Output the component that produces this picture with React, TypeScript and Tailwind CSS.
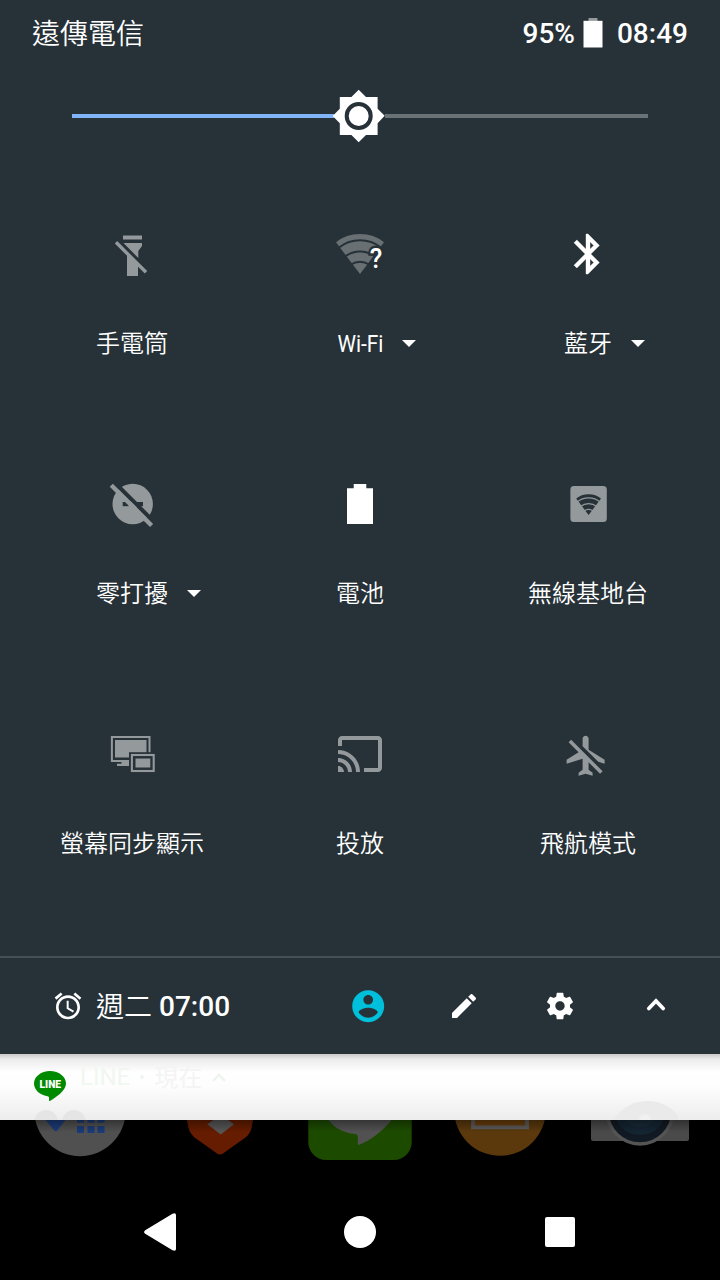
import type { ReactNode } from "react";

const OFF = "#94999c";
const PANEL = "#273238";

function Caret() {
  return (
    <svg width="14" height="8" viewBox="0 0 14 8" aria-hidden="true">
      <path d="M0 0h14L7 7z" fill="#fff" />
    </svg>
  );
}

function FlashlightOff() {
  return (
    <svg width="48" height="48" viewBox="0 0 48 48" fill={OFF}>
      <path d="M15 5.5h19v4H15z" />
      <path d="M15.5 13H34v3l-3.700 5v7z" />
      <path d="M19 22.500L30 34v12H19z" />
      <path d="M8 12.300l30 30" stroke={OFF} strokeWidth="3.400" />
    </svg>
  );
}

function WifiUnknown() {
  return (
    <svg width="48" height="48" viewBox="0 0 48 48">
      <path d="M24 44L0 12.300Q10 4 24 4t24 8.300z" fill="#687074" />
      <g fill="none" stroke={PANEL} strokeWidth="2">
        <path d="M3 17.500a34 34 0 0 1 42 0" />
        <path d="M9 26.500a25 25 0 0 1 30 0" />
        <path d="M15 34.500a16 16 0 0 1 18 0" />
      </g>
      <text
        x="40"
        y="38"
        textAnchor="middle"
        fontFamily="Roboto, sans-serif"
        fontWeight="500"
        fontSize="28"
        textLength="12.500"
        lengthAdjust="spacingAndGlyphs"
        fill="#fff"
        stroke={PANEL}
        strokeWidth="5"
        paintOrder="stroke"
      >
        ?
      </text>
    </svg>
  );
}

function Bluetooth() {
  return (
    <svg width="48" height="48" viewBox="0 0 24 24" fill="#fff" stroke="#fff" strokeWidth="0.200">
      <path d="M17.71 7.71L12 2h-1v7.59L6.41 5 5 6.41 10.59 12 5 17.59 6.41 19 11 14.41V22h1l5.71-5.71-4.3-4.29 4.3-4.29zM13 5.83l1.88 1.88L13 9.59V5.83zm1.88 10.46L13 18.17v-3.76l1.88 1.88z" />
    </svg>
  );
}

function DndOff() {
  return (
    <svg width="48" height="48" viewBox="0 0 48 48">
      <circle cx="24.700" cy="24" r="20.200" fill={OFF} />
      <path d="M14.700 22h20.300v4.200H14.700z" fill={PANEL} />
      <path d="M8 4l41 41" stroke={PANEL} strokeWidth="4.200" />
      <path d="M3.300 5.200l40.300 40.300" stroke={OFF} strokeWidth="4.400" />
      <path d="M20 21.500h3l6 6h-8z" fill={OFF} />
    </svg>
  );
}

function Battery() {
  return (
    <svg width="48" height="48" viewBox="0 0 48 48" fill="#fff">
      <path d="M17.700 4h12.600v4.300H37V44H11V8.300h6.700z" />
    </svg>
  );
}

function Hotspot() {
  return (
    <svg width="48" height="48" viewBox="0 0 48 48">
      <rect x="6.400" y="6" width="36.400" height="36" rx="3.500" fill={OFF} />
      <path d="M24.600 35L12.200 18.600q5-4.300 12.400-4.300t12.400 4.300z" fill={PANEL} />
      <g fill="none" stroke={OFF} strokeWidth="1.200">
        <path d="M13 22.200a18 18 0 0 1 23.200 0" />
        <path d="M16.500 26.500a13 13 0 0 1 16.200 0" />
        <path d="M20 31a8 8 0 0 1 9.200 0" />
      </g>
    </svg>
  );
}

function ScreenMirror() {
  return (
    <svg width="48" height="48" viewBox="0 0 48 48">
      <rect x="3.900" y="7" width="37.600" height="24" fill="none" stroke={OFF} strokeWidth="2" />
      <path d="M7 10h31.500v17.500H7z" fill={OFF} />
      <path d="M13.500 31h8v5H9v-2.200h4.500z" fill={OFF} />
      <path d="M21 22.200h27v21H21z" fill={PANEL} />
      <rect x="23.900" y="25" width="21.800" height="16" fill="none" stroke={OFF} strokeWidth="2.100" />
      <path d="M27.500 28.500h14.800v9H27.500z" fill={OFF} />
    </svg>
  );
}

function Cast() {
  return (
    <svg width="48" height="48" viewBox="0 0 24 24" fill={OFF}>
      <path d="M21 3H3c-1.1 0-2 .9-2 2v3h2V5h18v14h-7v2h7c1.1 0 2-.9 2-2V5c0-1.1-.9-2-2-2zM1 18v3h3c0-1.66-1.34-3-3-3zm0-4v2c2.76 0 5 2.24 5 5h2c0-3.87-3.13-7-7-7zm0-4v2c4.97 0 9 4.03 9 9h2c0-6.08-4.93-11-11-11z" />
    </svg>
  );
}

function AirplaneOff() {
  return (
    <svg width="48" height="48" viewBox="0.7 -0.9 24 24" fill={OFF}>
      <path d="M13 9V3.500c0-.83-.67-1.500-1.500-1.500S10 2.670 10 3.500v3.680l7.830 7.830L21 16v-2l-8-5zM3 5.270l4.990 4.990L2 14v2l8-2.500V19l-2 1.500V22l3.500-1 3.500 1v-1.500L13 19v-3.730L18.730 21 20 19.730 4.270 4 3 5.270z" />
    </svg>
  );
}

type Tile = { label: ReactNode; icon: ReactNode; menu?: boolean };

const tiles: Tile[] = [
  { label: "手電筒", icon: <FlashlightOff /> },
  {
    label: <span className="-mx-[3px] inline-block scale-x-[0.87] font-normal">Wi-Fi</span>,
    icon: <WifiUnknown />,
    menu: true,
  },
  { label: "藍牙", icon: <Bluetooth />, menu: true },
  { label: "零打擾", icon: <DndOff />, menu: true },
  { label: "電池", icon: <Battery /> },
  { label: "無線基地台", icon: <Hotspot /> },
  { label: "螢幕同步顯示", icon: <ScreenMirror /> },
  { label: "投放", icon: <Cast /> },
  { label: "飛航模式", icon: <AirplaneOff /> },
];

function StatusBar() {
  return (
    <header className="flex h-[66px] items-center justify-between px-8 text-[28px] leading-none text-white">
      <span className="pb-[3px] font-['Noto_Sans_CJK_TC',sans-serif] font-[350]">遠傳電信</span>
      <div className="flex items-center font-medium">
        <span className="pt-[2px]">95%</span>
        <svg className="mr-[14px] ml-2" width="20" height="30" viewBox="0 0 20 30">
          <path d="M5.500 0h9v4h-9z" fill="#94999c" />
          <path d="M.5 2.800h19V29.500H.5z" fill="#fff" />
        </svg>
        <span className="pt-[2px]">08:49</span>
      </div>
    </header>
  );
}

function Brightness() {
  return (
    <div className="flex h-[100px] items-center px-[72px]">
      <div className="h-1 w-[262px] bg-[#81b4f8]" />
      <svg className="-mr-px -ml-[2px] shrink-0" width="54" height="54" viewBox="-26.700 -27 54 54">
        <path
          d="M0-26.300L7.300-19H18.900V-7.300L26-.2 18.900 7.300V19H7.300L0 26.300-7.300 19H-18.900V7.300L-26 0-18.900-7.300V-19H-7.300z"
          fill="#fff"
        />
        <circle r="12" fill="none" stroke={PANEL} strokeWidth="4" />
      </svg>
      <div className="h-1 flex-1 bg-[#697277]" />
    </div>
  );
}

function Footer() {
  return (
    <div className="flex h-[98px] items-center border-t-2 border-[#435057] pr-4 pl-[52px] text-white">
      <svg width="32" height="32" viewBox="0 0 24 24" fill="#fff">
        <path d="M22 5.72l-4.6-3.86-1.29 1.53 4.6 3.86L22 5.72zM7.88 3.39L6.6 1.86 2 5.71l1.29 1.53 4.59-3.85zM12.5 8H11v6l4.75 2.85.75-1.23-4-2.37V8zM12 4c-4.97 0-9 4.03-9 9s4.02 9 9 9c4.97 0 9-4.03 9-9s-4.03-9-9-9zm0 16c-3.87 0-7-3.13-7-7s3.13-7 7-7 7 3.13 7 7-3.13 7-7 7z" />
      </svg>
      <div className="ml-3 flex flex-1 items-center text-[28px] leading-none">
        <span className="pb-[2px] font-['Noto_Sans_CJK_TC',sans-serif] font-[350]">週二</span>
        <span className="ml-[7px] pt-[2px] font-medium">07:00</span>
      </div>
      <div className="grid grid-cols-[repeat(4,96px)] place-items-center">
        <svg width="38.400" height="38.400" viewBox="0 0 24 24" fill="#00bfda">
          <path d="M12 2C6.48 2 2 6.48 2 12s4.48 10 10 10 10-4.48 10-10S17.52 2 12 2zm0 3c1.66 0 3 1.34 3 3s-1.34 3-3 3-3-1.34-3-3 1.34-3 3-3zm0 14.2c-2.5 0-4.71-1.28-6-3.22.03-1.99 4-3.08 6-3.08 1.99 0 5.97 1.09 6 3.08-1.29 1.94-3.5 3.22-6 3.22z" />
        </svg>
        <svg width="32" height="32" viewBox="0 0 24 24" fill="#fff">
          <path d="M3 17.25V21h3.75L17.81 9.94l-3.75-3.75L3 17.25zM20.71 7.04c.39-.39.39-1.02 0-1.41l-2.34-2.34c-.39-.39-1.02-.39-1.41 0l-1.83 1.83 3.75 3.75 1.83-1.83z" />
        </svg>
        <svg width="32" height="32" viewBox="0 0 24 24" fill="#fff">
          <path d="M19.43 12.98c.04-.32.07-.64.07-.98s-.03-.66-.07-.98l2.11-1.65c.19-.15.24-.42.12-.64l-2-3.46c-.12-.22-.39-.3-.61-.22l-2.49 1c-.52-.4-1.08-.73-1.69-.98l-.38-2.65C14.46 2.18 14.25 2 14 2h-4c-.25 0-.46.18-.49.42l-.38 2.65c-.61.25-1.17.59-1.69.98l-2.49-1c-.23-.09-.49 0-.61.22l-2 3.46c-.13.22-.07.49.12.64l2.11 1.65c-.04.32-.07.65-.07.98s.03.66.07.98l-2.11 1.65c-.19.15-.24.42-.12.64l2 3.46c.12.22.39.3.61.22l2.49-1c.52.4 1.08.73 1.69.98l.38 2.65c.03.24.24.42.49.42h4c.25 0 .46-.18.49-.42l.38-2.65c.61-.25 1.17-.59 1.69-.98l2.49 1c.23.09.49 0 .61-.22l2-3.46c.12-.22.07-.49-.12-.64l-2.11-1.65zM12 15.5c-1.93 0-3.5-1.57-3.5-3.5s1.57-3.5 3.5-3.5 3.5 1.57 3.5 3.5-1.57 3.500-3.500 3.500z" />
        </svg>
        <svg width="24" height="24" viewBox="0 0 24 24" fill="none">
          <path d="M4.800 14.500L12 7l7.200 7.500" stroke="#fff" strokeWidth="3.800" strokeLinecap="round" />
        </svg>
      </div>
    </div>
  );
}

// Collapsed notification, fading in under the quick settings panel
function Notification() {
  return (
    <section className="relative flex h-[66px] bg-[linear-gradient(#c9c9c9,#ececec_8%,#fff_28%,#fdfdfd_50%,#ededed)] pl-[34px]">
      <svg className="mt-4 shrink-0" width="32" height="31" viewBox="0 0 32 31">
        <path d="M16 1C7.200 1 0 6.500 0 13.500c0 6 5.500 11.500 13.500 12.700 2 .4 1.600 1.300 1.500 4.300 0 .5.400.6.800.4C21 28 32 21 32 13.500 32 6.500 24.800 1 16 1z" fill="#008a00" />
        <text
          x="16.300"
          y="18.300"
          textAnchor="middle"
          textLength="21.500"
          lengthAdjust="spacingAndGlyphs"
          fontFamily="Roboto, sans-serif"
          fontWeight="900"
          fontSize="10.200"
          fill="#fff"
        >
          LINE
        </text>
      </svg>
      <div className="mt-[11px] ml-[14px] flex h-6 items-center text-2xl leading-none">
        <span className="text-[#f0f7f0]">LINE</span>
        <span className="mx-[10px] size-1 rounded-full bg-[#eff5ef]" />
        <span className="pb-[2px] font-['Noto_Sans_CJK_TC',sans-serif] text-[#f4f4f4]">現在</span>
        <svg className="ml-[10px]" width="14" height="9" viewBox="0 0 14 9" fill="none">
          <path d="M1 8l6-6 6 6" stroke="#edf4ed" strokeWidth="2.400" />
        </svg>
      </div>
      <svg className="absolute bottom-0 left-[34px]" width="52" height="10" viewBox="0 0 52 10" fill="#e5e5e5">
        <circle cx="12" cy="12" r="12" />
        <circle cx="40" cy="12" r="12" />
      </svg>
      <svg className="absolute bottom-0 left-[614px]" width="66" height="19" viewBox="0 0 66 19">
        <path d="M0 19C8 6 20 0 34 0c12 0 24 6 30 15v4z" fill="#ebeaea" />
        <circle cx="31" cy="19" r="6" fill="#f0f0f0" />
      </svg>
    </section>
  );
}

function Dock() {
  return (
    <section className="relative flex h-16 items-start bg-black">
      <svg className="ml-[34px]" width="92" height="37" viewBox="34 1120 92 37">
        <circle cx="80" cy="1110.500" r="45.700" fill="#505050" />
        <path d="M45.500 1120h20l-8.300 10.500q-1.400 1.500-2.800 0z" fill="#1b3b78" />
        <path d="M77 1120h7v2.700h-7zM87.500 1120h7v2.700h-7zM97.500 1120h7v2.700h-7zM77 1126h7v7h-7zM87.500 1126h7v7h-7zM97.500 1126h7v7h-7z" fill="#1b3b78" />
      </svg>
      <svg className="ml-[61px]" width="66" height="36" viewBox="187 1120 66 36">
        <path d="M187 1120h66l-1.500 8q-1.500 6-6 9.500L223 1153.500q-3 2-6 0L194.500 1137.500q-4.500-4-6-9.500z" fill="#651c00" />
        <path d="M207.300 1124.300l6-4.300h14.500l6.200 4.300-13.300 10.300z" fill="#565656" />
      </svg>
      <svg className="ml-[55px]" width="104" height="40" viewBox="308 1120 104 40">
        <path d="M308.300 1120h103.400v22a18 18 0 0 1-18 18h-67.400a18 18 0 0 1-18-18z" fill="#1c4b00" />
        <path d="M328.500 1120h63c-8 10-20 20-31.500 24.500-1.500.7-2.500 0-2.300-1.500.5-5 .8-8.700-2.700-9-11-1-20.500-6-26.500-14z" fill="#515151" />
      </svg>
      <svg className="ml-[42px]" width="92" height="37" viewBox="454 1120 92 37">
        <circle cx="500" cy="1110" r="45.800" fill="#5b390d" />
        <path d="M473 1118v9.300h54V1118" fill="#683d0a" stroke="#5b5b5b" strokeWidth="3.800" />
      </svg>
      <svg className="ml-[45px]" width="98" height="27" viewBox="591 1120 98 27">
        <path d="M591 1120h98v19q0 2-2 2h-94q-2 0-2-2z" fill="#4a4a4a" />
        <circle cx="640" cy="1111.300" r="34.400" fill="#555" />
        <circle cx="640" cy="1111.300" r="31" fill="#111a22" />
        <circle cx="640" cy="1109" r="26" fill="#142532" />
        <circle cx="640" cy="1109" r="18" fill="#182b39" />
      </svg>
      <div className="absolute inset-x-0 top-0 h-3 bg-linear-to-b from-black/35 to-transparent" />
    </section>
  );
}

function NavBar() {
  return (
    <nav className="grid h-24 grid-cols-3 place-items-center bg-black px-[60px]">
      <svg width="32" height="38" viewBox="0 0 32 38">
        <path d="M1.200 17.200L28.500.7Q32-.6 32 2v34q0 2.600-3.500 1.300L1.200 20.800q-2.200-1.800 0-3.600z" fill="#fff" />
      </svg>
      <div className="size-8 rounded-full bg-white" />
      <div className="size-[30px] rounded-[2px] bg-white" />
    </nav>
  );
}

export default function App() {
  return (
    <main className="h-[1280px] w-[720px] overflow-hidden bg-black font-['Roboto','Noto_Sans_CJK_TC',sans-serif]">
      <section className="h-[1054px] bg-[#273238]">
        <StatusBar />
        <Brightness />
        <div className="grid h-[790px] auto-rows-[250px] grid-cols-3 px-[18px] pt-16">
          {tiles.map((tile, i) => (
            <div key={i} className="flex flex-col items-center">
              {tile.icon}
              <div className="relative mt-[54px] text-2xl leading-6 font-[350] whitespace-nowrap text-white">
                {tile.label}
                {tile.menu && (
                  <span className="absolute top-2 left-full ml-[19px]">
                    <Caret />
                  </span>
                )}
              </div>
            </div>
          ))}
        </div>
        <Footer />
      </section>
      <Notification />
      <Dock />
      <NavBar />
    </main>
  );
}
